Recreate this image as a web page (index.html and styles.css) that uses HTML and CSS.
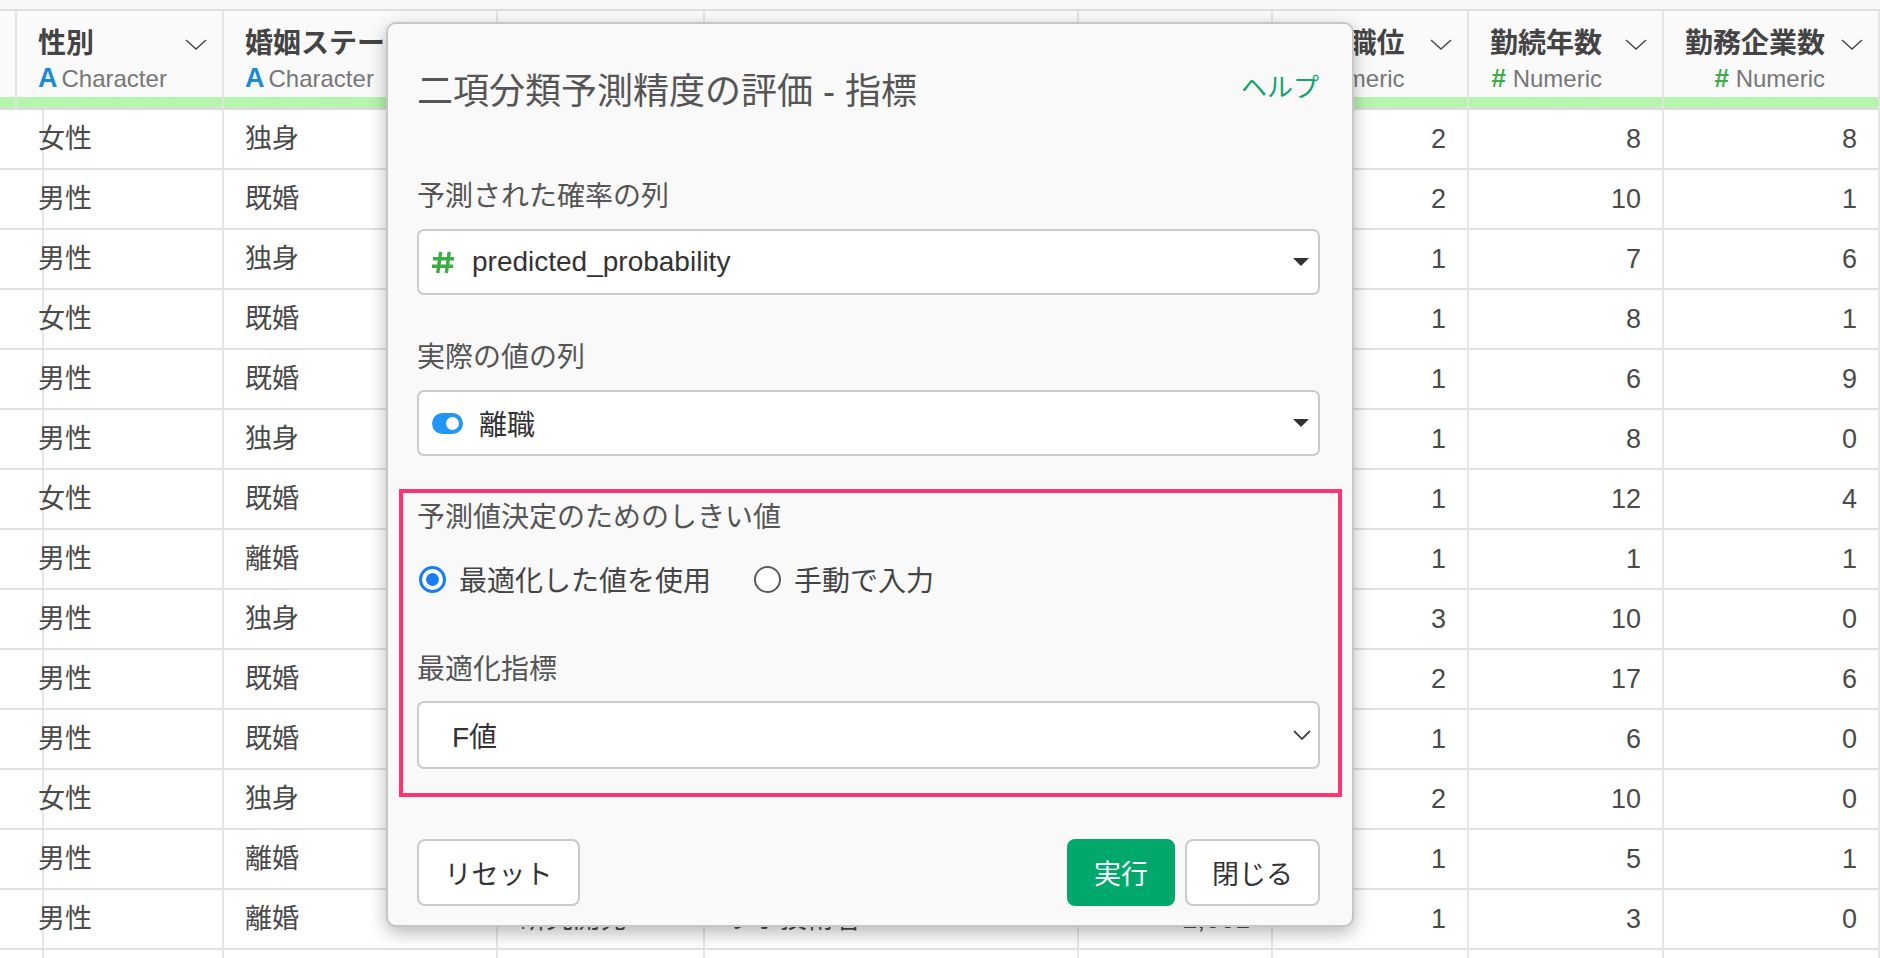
FILE: index.html
```html
<!DOCTYPE html>
<html lang="ja">
<head>
    <meta charset="UTF-8">
    <title>二項分類予測精度の評価 - 指標</title>
    <link rel="stylesheet" href="styles.css">
</head>
<body>
<div class="page">

    <div class="topbar"></div>

    <div class="sheet">
        <div class="hcell"><div class="head"></div><div class="bar"></div></div>
        <div class="hcell">
            <div class="head">
                <div class="hname"><div class="title">性別</div><div class="type"><span class="ic-a">A</span>Character</div></div>
                <svg class="chev" viewBox="0 0 22 34"><polyline points="1,13 11,22 21,13"/></svg>
            </div>
            <div class="bar"></div>
        </div>
        <div class="hcell">
            <div class="head">
                <div class="hname"><div class="title">婚姻ステータス</div><div class="type"><span class="ic-a">A</span>Character</div></div>
                <svg class="chev" viewBox="0 0 22 34"><polyline points="1,13 11,22 21,13"/></svg>
            </div>
            <div class="bar"></div>
        </div>
        <div class="hcell"><div class="head"></div><div class="bar"></div></div>
        <div class="hcell"><div class="head"></div><div class="bar"></div></div>
        <div class="hcell"><div class="head"></div><div class="bar"></div></div>
        <div class="hcell numeric">
            <div class="head">
                <div class="hname"><div class="title">職位</div><div class="type"><span class="ic-n">#</span> Numeric</div></div>
                <svg class="chev" viewBox="0 0 22 34"><polyline points="1,13 11,22 21,13"/></svg>
            </div>
            <div class="bar"></div>
        </div>
        <div class="hcell numeric">
            <div class="head">
                <div class="hname"><div class="title">勤続年数</div><div class="type"><span class="ic-n">#</span> Numeric</div></div>
                <svg class="chev" viewBox="0 0 22 34"><polyline points="1,13 11,22 21,13"/></svg>
            </div>
            <div class="bar"></div>
        </div>
        <div class="hcell numeric">
            <div class="head">
                <div class="hname"><div class="title">勤務企業数</div><div class="type"><span class="ic-n">#</span> Numeric</div></div>
                <svg class="chev" viewBox="0 0 22 34"><polyline points="1,13 11,22 21,13"/></svg>
            </div>
            <div class="bar"></div>
        </div>

        <div class="cell"></div><div class="cell">女性</div><div class="cell">独身</div><div class="cell"></div><div class="cell"></div><div class="cell num"></div><div class="cell num">2</div><div class="cell num">8</div><div class="cell num">8</div>
        <div class="cell"></div><div class="cell">男性</div><div class="cell">既婚</div><div class="cell"></div><div class="cell"></div><div class="cell num"></div><div class="cell num">2</div><div class="cell num">10</div><div class="cell num">1</div>
        <div class="cell"></div><div class="cell">男性</div><div class="cell">独身</div><div class="cell"></div><div class="cell"></div><div class="cell num"></div><div class="cell num">1</div><div class="cell num">7</div><div class="cell num">6</div>
        <div class="cell"></div><div class="cell">女性</div><div class="cell">既婚</div><div class="cell"></div><div class="cell"></div><div class="cell num"></div><div class="cell num">1</div><div class="cell num">8</div><div class="cell num">1</div>
        <div class="cell"></div><div class="cell">男性</div><div class="cell">既婚</div><div class="cell"></div><div class="cell"></div><div class="cell num"></div><div class="cell num">1</div><div class="cell num">6</div><div class="cell num">9</div>
        <div class="cell"></div><div class="cell">男性</div><div class="cell">独身</div><div class="cell"></div><div class="cell"></div><div class="cell num"></div><div class="cell num">1</div><div class="cell num">8</div><div class="cell num">0</div>
        <div class="cell"></div><div class="cell">女性</div><div class="cell">既婚</div><div class="cell"></div><div class="cell"></div><div class="cell num"></div><div class="cell num">1</div><div class="cell num">12</div><div class="cell num">4</div>
        <div class="cell"></div><div class="cell">男性</div><div class="cell">離婚</div><div class="cell"></div><div class="cell"></div><div class="cell num"></div><div class="cell num">1</div><div class="cell num">1</div><div class="cell num">1</div>
        <div class="cell"></div><div class="cell">男性</div><div class="cell">独身</div><div class="cell"></div><div class="cell"></div><div class="cell num"></div><div class="cell num">3</div><div class="cell num">10</div><div class="cell num">0</div>
        <div class="cell"></div><div class="cell">男性</div><div class="cell">既婚</div><div class="cell"></div><div class="cell"></div><div class="cell num"></div><div class="cell num">2</div><div class="cell num">17</div><div class="cell num">6</div>
        <div class="cell"></div><div class="cell">男性</div><div class="cell">既婚</div><div class="cell"></div><div class="cell"></div><div class="cell num"></div><div class="cell num">1</div><div class="cell num">6</div><div class="cell num">0</div>
        <div class="cell"></div><div class="cell">女性</div><div class="cell">独身</div><div class="cell"></div><div class="cell"></div><div class="cell num"></div><div class="cell num">2</div><div class="cell num">10</div><div class="cell num">0</div>
        <div class="cell"></div><div class="cell">男性</div><div class="cell">離婚</div><div class="cell"></div><div class="cell"></div><div class="cell num"></div><div class="cell num">1</div><div class="cell num">5</div><div class="cell num">1</div>
        <div class="cell"></div><div class="cell">男性</div><div class="cell">離婚</div><div class="cell">研究開発</div><div class="cell">ラボ技術者</div><div class="cell num">2,661</div><div class="cell num">1</div><div class="cell num">3</div><div class="cell num">0</div>
        <div class="cell"></div><div class="cell"></div><div class="cell"></div><div class="cell"></div><div class="cell"></div><div class="cell"></div><div class="cell"></div><div class="cell"></div><div class="cell"></div>
    </div>

    <div class="dialog">
        <div class="dlg-head">
            <div class="dlg-title">二項分類予測精度の評価 - 指標</div>
            <a class="help">ヘルプ</a>
        </div>

        <div class="label first">予測された確率の列</div>
        <div class="select">
            <svg class="hash" viewBox="0 0 24 24"><path d="M9 1 L6 23 M18 1 L15 23 M1 8 H23 M0 16 H22"/></svg>
            <span class="value">predicted_probability</span>
            <span class="caret"></span>
        </div>

        <div class="label">実際の値の列</div>
        <div class="select">
            <span class="toggle"><span class="knob"></span></span>
            <span class="value">離職</span>
            <span class="caret"></span>
        </div>

        <div class="highlight">
            <div class="label">予測値決定のためのしきい値</div>
            <div class="radios">
                <span class="radio checked"></span>
                <span class="radio-text">最適化した値を使用</span>
                <span class="radio"></span>
                <span class="radio-text">手動で入力</span>
            </div>
            <div class="label metric">最適化指標</div>
            <div class="select native">
                <span class="value">F値</span>
                <svg class="down" viewBox="0 0 18 10"><polyline points="1,1 9,9 17,1"/></svg>
            </div>
        </div>

        <div class="dlg-foot">
            <button class="btn reset">リセット</button>
            <div class="right">
                <button class="btn run">実行</button>
                <button class="btn close">閉じる</button>
            </div>
        </div>
    </div>

</div>
</body>
</html>
```

FILE: styles.css
```css
body {
    margin: 0;
    background-color: #fff;
    font-family: "Liberation Sans", "Noto Sans CJK JP", sans-serif;
    color: #444;
}
.page {
    position: relative;
    height: 958px;
    overflow: hidden;
}
.topbar {
    height: 9px;
    background-color: #f7f7f7;
    border-bottom: 2px solid #dedede;
}
.sheet {
    display: grid;
    grid-template-columns: 17px 207px 274px 207px 374px 194px 196px 195px 216px;
}
.hcell {
    background-color: #fafafa;
    border-right: 2px solid #e4e4e4;
    border-bottom: 2px solid #dcdcdc;
    overflow: hidden;
}
.head {
    height: 86px;
    box-sizing: border-box;
    padding: 15px 15px 0 21px;
    display: flex;
    justify-content: space-between;
    align-items: flex-start;
}
.hname {
    white-space: nowrap;
}
.numeric .hname {
    text-align: right;
}
.title {
    font-size: 28px;
    font-weight: bold;
    line-height: 36px;
    color: #444;
}
.type {
    font-size: 24px;
    line-height: 32px;
    color: #777;
}
.ic-a {
    color: #1a8ad6;
    font-weight: bold;
    font-size: 27px;
    margin-right: 4px;
}
.ic-n {
    color: #3cad45;
    font-weight: bold;
    font-size: 26px;
}
.chev {
    width: 22px;
    height: 36px;
    flex-shrink: 0;
    margin-left: 12px;
    fill: none;
    stroke: #444;
    stroke-width: 1.4;
}
.bar {
    height: 11px;
    background-color: #b6f4b0;
}
.cell {
    height: 60px;
    box-sizing: border-box;
    border-right: 2px solid #e6e6e6;
    border-bottom: 2px solid #e1e1e1;
    padding: 0 21px;
    font-size: 27px;
    line-height: 58px;
    color: #4a4a4a;
    white-space: nowrap;
    overflow: hidden;
}
.cell.num {
    text-align: right;
}

/* modal */
.dialog {
    position: absolute;
    left: 386px;
    top: 22px;
    width: 968px;
    box-sizing: border-box;
    background-color: #f9f9f9;
    border: 2px solid #c6c6c6;
    border-radius: 10px;
    box-shadow: 0 6px 18px rgba(0, 0, 0, 0.28);
    padding: 34px 32px 19px 29px;
}
.dlg-head {
    height: 60px;
    display: flex;
    justify-content: space-between;
    align-items: center;
}
.dlg-title {
    font-size: 36px;
    color: #555;
}
.help {
    font-size: 26px;
    color: #12a46c;
    padding-bottom: 6px;
    margin-right: 1px;
}
.label {
    font-size: 28px;
    line-height: 40px;
    color: #555;
    margin-top: 43px;
}
.label.first {
    margin-top: 59px;
}
.select {
    margin-top: 12px;
    height: 66px;
    box-sizing: border-box;
    background-color: #fff;
    border: 2px solid #cacaca;
    border-radius: 7px;
    display: flex;
    align-items: center;
    padding: 0 9px 0 13px;
    font-size: 28px;
    color: #333;
}
.select .value {
    flex: 1;
}
.hash {
    width: 23px;
    height: 23px;
    margin-right: 17px;
    fill: none;
    stroke: #3cad45;
    stroke-width: 3.6;
    flex-shrink: 0;
}
.toggle {
    width: 31px;
    height: 21px;
    border-radius: 11px;
    background-color: #2196f3;
    margin-right: 16px;
    position: relative;
    flex-shrink: 0;
}
.knob {
    position: absolute;
    right: 4px;
    top: 4px;
    width: 13px;
    height: 13px;
    border-radius: 50%;
    background-color: #fff;
}
.caret {
    width: 0;
    height: 0;
    border-left: 8px solid transparent;
    border-right: 8px solid transparent;
    border-top: 8px solid #333;
}
.highlight {
    margin: 33px -22px 0 -18px;
    border: 4px solid #ff3370;
    padding: 5px 18px 24px 14px;
}
.highlight .label {
    margin-top: 0;
}
.highlight .label.metric {
    margin-top: 51px;
}
.radios {
    margin-top: 21px;
    height: 40px;
    display: flex;
    align-items: center;
    font-size: 28px;
    color: #444;
}
.radio {
    width: 27px;
    height: 27px;
    box-sizing: border-box;
    border-radius: 50%;
    border: 2px solid #5a5a5a;
    background-color: #fff;
    margin-left: 2px;
    margin-right: 13px;
    position: relative;
    flex-shrink: 0;
}
.radio.checked {
    border: 3px solid #1a7cf5;
}
.radio.checked::after {
    content: "";
    position: absolute;
    left: 4px;
    top: 4px;
    width: 13px;
    height: 13px;
    border-radius: 50%;
    background-color: #1a7cf5;
}
.radio-text {
    margin-right: 41px;
}
.select.native {
    margin-top: 11px;
    height: 68px;
    padding: 0 7px 0 33px;
}
.down {
    width: 18px;
    height: 10px;
    fill: none;
    stroke: #444;
    stroke-width: 1.8;
}
.dlg-foot {
    margin-top: 42px;
    display: flex;
    justify-content: space-between;
}
.right {
    display: flex;
    gap: 10px;
}
.btn {
    height: 67px;
    box-sizing: border-box;
    font-family: "Liberation Sans", "Noto Sans CJK JP", sans-serif;
    font-size: 27px;
    color: #333;
    background-color: #fff;
    border: 2px solid #cacaca;
    border-radius: 8px;
    cursor: pointer;
}
.reset {
    width: 163px;
}
.run {
    width: 108px;
    background-color: #00a96b;
    border-color: #00a96b;
    color: #fff;
}
.close {
    width: 135px;
}
```
